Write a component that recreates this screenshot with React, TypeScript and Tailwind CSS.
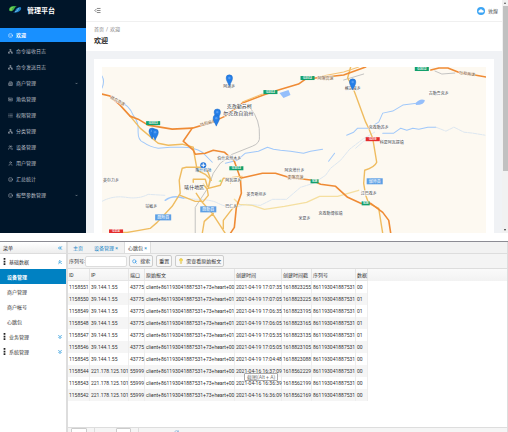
import { useState } from 'react';
import {
  Building2,
  ChevronDown,
  ChevronsDown,
  ChevronsLeft,
  ChevronsUp,
  IdCard,
  IndentDecrease,
  Lightbulb,
  List,
  Meh,
  Network,
  RotateCw,
  Search,
  Smile,
  User,
  Users,
} from 'lucide-react';

const menuItems = [
  { label: '欢迎', icon: Smile },
  { label: '命令接收日志', icon: Network },
  { label: '命令发送日志', icon: Network },
  { label: '商户管理', icon: Building2, nested: true },
  { label: '角色管理', icon: IdCard },
  { label: '权限管理', icon: List },
  { label: '分类管理', icon: Network },
  { label: '设备管理', icon: Users },
  { label: '用户管理', icon: User },
  { label: '汇总统计', icon: Meh },
  { label: '报警参数管理', icon: Smile, nested: true },
];

const treeItems = ['设备管理', '商户管理', '商户帐号', '心跳包'];

const columns = [
  { title: 'ID', width: 'w-[22px]' },
  { title: 'IP', width: 'w-[39px]' },
  { title: '端口', width: 'w-[16px]' },
  { title: '原始报文', width: 'w-[90px]' },
  { title: '创建时间', width: 'w-[47px]' },
  { title: '创建时间戳', width: 'w-[30px]' },
  { title: '序列号', width: 'w-[44px]' },
  { title: '数据', width: 'w-[12px]' },
];

const heartbeats = [
  { id: '1158551', ip: '39.144.1.55', port: '43775', time: '2021-04-19 17:07:35', stamp: '1618823255', data: '00' },
  { id: '1158550', ip: '39.144.1.55', port: '43775', time: '2021-04-19 17:07:05', stamp: '1618823225', data: '01' },
  { id: '1158549', ip: '39.144.1.55', port: '43775', time: '2021-04-19 17:06:35', stamp: '1618823195', data: '01' },
  { id: '1158548', ip: '39.144.1.55', port: '43775', time: '2021-04-19 17:06:05', stamp: '1618823165', data: '01' },
  { id: '1158547', ip: '39.144.1.55', port: '43775', time: '2021-04-19 17:05:35', stamp: '1618823135', data: '01' },
  { id: '1158546', ip: '39.144.1.55', port: '43775', time: '2021-04-19 17:05:05', stamp: '1618823105', data: '00' },
  { id: '1158545', ip: '39.144.1.55', port: '43775', time: '2021-04-19 17:04:48', stamp: '1618823088', data: '00' },
  { id: '1158544', ip: '221.178.125.101', port: '55999', time: '2021-04-16 16:37:09', stamp: '1618562229', data: '00' },
  { id: '1158543', ip: '221.178.125.101', port: '55999', time: '2021-04-16 16:36:39', stamp: '1618562199', data: '00' },
  { id: '1158542', ip: '221.178.125.101', port: '55999', time: '2021-04-16 16:36:09', stamp: '1618562169', data: '00' },
];

const serial = '861193041887531';

const pins = [
  [217, 118],
  [216, 124],
  [152, 137],
  [155, 138],
  [229, 84],
  [352, 88],
];

const places = [
  { x: 229, y: 88, name: '阿湖乡' },
  { x: 352, y: 90, name: '格达良乡' },
  { x: 438, y: 95, name: '古勒鲁克乡' },
  { x: 378, y: 129, name: '克孜勒苏乡' },
  { x: 391, y: 144, name: '科夏阿瓦提镇' },
  { x: 111, y: 182, name: '英尔力乡' },
  { x: 151, y: 208, name: '站敏乡' },
  { x: 229, y: 160, name: '伯什克然木乡' },
  { x: 233, y: 182, name: '阿瓦提乡' },
  { x: 294, y: 172, name: '阿克塔什乡' },
  { x: 256, y: 196, name: '英吾斯坦乡' },
  { x: 231, y: 208, name: '巴仁乡' },
  { x: 304, y: 220, name: '米夏乡' },
  { x: 330, y: 215, name: '克孜勒博依镇' },
  { x: 368, y: 195, name: '江巴孜乡' },
];

const shields = [
  { x: 153, y: 123, code: 'G3013', fill: '#12a06c' },
  { x: 307, y: 78, code: 'G3012', fill: '#12a06c' },
  { x: 270, y: 92, code: 'G3012', fill: '#12a06c' },
  { x: 236, y: 168, code: 'G3012', fill: '#12a06c' },
  { x: 314, y: 181, code: 'S38', fill: '#12a06c' },
  { x: 365, y: 203, code: 'S38', fill: '#12a06c' },
  { x: 421, y: 69, code: 'G3012', fill: '#12a06c' },
  { x: 372, y: 139, code: 'G209', fill: '#e42c2c' },
  { x: 116, y: 231, code: 'G314', fill: '#e42c2c' },
];

const counties = [
  { x: 163, y: 217, name: '疏附县' },
  { x: 208, y: 209, name: '疏勒县' },
  { x: 374, y: 181, name: '伽师县' },
];

function DistrictMap() {
  return (
    <svg viewBox="102 67 383 166" className="block w-full" role="img" aria-label="喀什地区">
      <rect x="102" y="67" width="383" height="166" fill="#fdf9f1" />
      <g fill="none" strokeLinejoin="round" strokeLinecap="round">
        {/* rivers */}
        <g stroke="#a0c8fa" strokeWidth="1">
          <path d="M102 76q3 5 0 12" />
          <path d="M120 102q9 3 13 13 6 7 5 17 0 8 5 10 7 5 15 6l12 -1 12 0q12 0 20 5l10 10" />
          <path d="M225 163l12 -3 8 -7 13 -2 9 -4 6 2 7 1 10 1 13 2 7 -2 12 -2" />
          <path d="M328 161l6 -8M346 135l7 -3 4 -4h11l10 -6 4 -9 10 -2 10 -6 16 -2" />
          <path d="M382 133h11l7 -5 6 2 6 -2 6 1 9 -2 8 0" />
          <path d="M165 200q8 -6 19 -2" strokeWidth="1.4" />
        </g>
        <g stroke="#d5e2f0" strokeWidth=".8" strokeDasharray="4 1">
          <path d="M102 201q11 -6 24 -4t22 -3l17 1M184 198l12 1q12 0 20 3q9 5 18 5l12 -3 14 1 12 -6 14 0 14 -12 13 -4 12 -8 5 -7 10 -8 9 -11 13 -10 12 -7" />
          <path d="M435 127l10 4 8 -4 10 5 9 1 12 2M355 148l8 -7 9 -3" />
        </g>
        {/* railway */}
        <g stroke="#b5b5b5" strokeWidth=".8">
          <path d="M195 233v-26l13 -20 5 -14 7 -10 12 -9 20 -8q8 -3 7 -10 1 -16 -9 -28" />
          <path d="M343 80l20 -6M434 71l7 3 13 -1" />
        </g>
        {/* county roads */}
        <g stroke="#efbc60" strokeWidth="1.4">
          <path d="M116 232h11q12 -2 23 -4l7 -6 15 -16 8 -13 -1 -13 3 -12 4 -1h15" />
          <path d="M130 116l10 12 18 15 10 2 14 -1 11 3 1 7 3 16 8 4 6 6" />
          <path d="M180 195l15 6 8 0 5 -6 -1 -6 -4 -5M207 170l3 8 -2 10 12 -3 3 -7h12M193 182v-3h12l2 7M196 193l6 9 10 11 13 20M213 213l-9 8 -2 12M233 207l-10 13 0 8" />
          <path d="M350 67l-3 11 5 9 3 8 10 27 3 6 4 10 4 24q-2 5 -12 8l-1 13 2 12 3 8 10 5 4 25" />
          <path d="M234 199l5 5 13 1 12 4 20 -3 22 -4 13 -6h18l21 -6" stroke="#f5dfa0" />
        </g>
        {/* expressways */}
        <g stroke="#ef8b35" strokeWidth="1.6">
          <path d="M102 94l8 2 10 9 10 11 8 3 10 6 24 4 20 -1 20 -6 13 -6 17 -13 21 -8 15 -5 20 -6 7 -5 20 -2 18 -2 22 -8" />
          <path d="M192 128l-9 13 10 9 2 4 10 -1 8 -3 11 2 10 9 6 17 1 15 -5 14 -2 20 -4 6" />
          <path d="M240 178l22 -5h13l13 4 24 3 8 4 15 2 12 11 13 6h10l12 9 6 8 2 13" />
          <path d="M430 70l8 -2 9 0 10 4 28 5" />
        </g>
        <path d="M242 102l20 -8M322 76l21 -4 15 -5M242 176l-10 1 -2 6" stroke="#f5c273" strokeWidth="1" />
      </g>
      <path d="M279 93l9 -3 2 5 -7 3zM415 103q4 -5 9 -3q0 5 -9 5z" fill="#95bffb" />
      <path d="M218 181l3 -2v3z" fill="#a7dd82" />

      <g className="font-['Noto_Sans_CJK_SC',sans-serif]" textAnchor="middle">
        <g fill="#806040" fontSize="4" stroke="#fdf9f1" strokeWidth=".6" paintOrder="stroke">
          <text x="117" y="102" transform="rotate(28 117 102)">疏乌高速</text>
          <text x="208" y="124" transform="rotate(-15 208 124)">吐和高速</text>
          <text x="325" y="80">阿喀高速</text>
          <text x="295" y="179">麦喀高速</text>
          <text x="466" y="75" transform="rotate(8 466 75)">吐和高速</text>
        </g>
        <g fill="#444" fontSize="4" stroke="#fff" strokeWidth=".8" paintOrder="stroke">
          {places.map((place) => (
            <text key={place.name} x={place.x} y={place.y}>{place.name}</text>
          ))}
        </g>
        <g fill="#333" fontSize="5" stroke="#fff" strokeWidth="1" paintOrder="stroke">
          <text x="239" y="108">克孜勒苏柯</text>
          <text x="238" y="115">尔克孜自治州</text>
          <text x="194" y="189">喀什地区</text>
        </g>
        <text x="203" y="172" fill="#2a6cb0" fontSize="4">喀什机场</text>
        <g fontSize="4" fill="#fff">
          {counties.map((county) => (
            <g key={county.name}>
              <rect x={county.x - 8} y={county.y - 3} width="16" height="6" fill="#5d9fe5" />
              <text x={county.x} y={county.y + 2}>{county.name}</text>
            </g>
          ))}
        </g>
      </g>
      <g fill="#fff" fontSize="3" fontWeight="bold" textAnchor="middle" className="font-['Liberation_Sans',sans-serif]">
        {shields.map((shield) => (
          <g key={`${shield.x}-${shield.y}`}>
            <rect
              x={shield.x - (shield.code.length > 3 ? 7 : 4)}
              y={shield.y - 2}
              width={shield.code.length > 3 ? 14 : 8}
              height="4"
              fill={shield.fill}
            />
            <text x={shield.x} y={shield.y + 1}>{shield.code}</text>
          </g>
        ))}
      </g>
      <circle cx="203" cy="165" r="3" fill="#2678dc" />
      <path d="M203 163v4M201 165h4" stroke="#fff" strokeWidth="1" />
      {pins.map(([x, y]) => (
        <g key={`${x}-${y}`} transform={`translate(${x} ${y})`}>
          <path d="M0 2C-1 -1 -3.2 -3 -3.2 -6a3.2 3.2 0 0 1 6.4 0C3.2 -3 1 -1 0 2z" fill="#257fe8" stroke="#1762bd" strokeWidth=".4" />
          <circle cy="-6" r="1.2" fill="#569df2" />
        </g>
      ))}
    </svg>
  );
}

function PlatformPanel() {
  const [active, setActive] = useState('欢迎');

  return (
    <section className="flex bg-[#f0f2f5]">
      <aside className="w-[86px] shrink-0 bg-[#001529] text-[#b8bec5]">
        <div className="flex h-[28px] items-start gap-[5px] pt-[5px] pl-[8px]">
          <svg viewBox="0 0 28 20" className="h-[10px] w-[14px]">
            <path d="M2 10C2 3 10 0 18 3C12 4 14 9 8 12C5 13 2 12 2 10z" fill="#43b649" />
            <path d="M9 4q-5 3 -3 7" fill="none" stroke="#d7eb6b" strokeWidth="1.5" />
            <path d="M26 5C28 11 20 16 10 15C17 13 13 9 19 6C22 4 25 3 26 5z" fill="#1b80c8" />
            <path d="M21 6q0 6 -7 8" fill="none" stroke="#9ed5ef" strokeWidth="1.3" />
          </svg>
          <h1 className="text-[7px] leading-[12px] font-bold text-white">管理平台</h1>
        </div>
        <nav className="flex flex-col gap-[2px]">
          {menuItems.map((item) => (
            <button
              key={item.label}
              type="button"
              onClick={() => setActive(item.label)}
              className={
                active === item.label
                  ? 'flex h-[14px] items-center gap-[3px] bg-[#1890ff] px-[8px] font-bold text-white'
                  : 'flex h-[14px] items-center gap-[3px] px-[8px]'
              }
            >
              <item.icon className="size-[5px]" />
              <span>{item.label}</span>
              {item.nested && <ChevronDown strokeWidth={4} className="ml-auto size-[3px]" />}
            </button>
          ))}
        </nav>
      </aside>

      <div className="min-w-0 flex-1">
        <header className="flex h-[22px] items-center border-b border-[#f0f0f0] bg-white pr-[4px] pl-[8px]">
          <button type="button" aria-label="收起菜单">
            <IndentDecrease className="size-[7px] text-[#333]" />
          </button>
          <div className="ml-auto flex items-center gap-[3px] text-[#555]">
            <svg viewBox="0 0 8 8" className="size-[8px]">
              <circle cx="4" cy="4" r="4" fill="#3da5f4" />
              <path d="M2 5.5a1.2 1.2 0 0 1 .4-2.2a1.7 1.7 0 0 1 3.1 0a1.1 1.1 0 0 1 .3 2.2z" fill="#fff" />
            </svg>
            <span>敦煌</span>
          </div>
        </header>
        <div className="flex h-[29px] flex-col gap-[3px] bg-white px-[8px] pt-[3px]">
          <div className="flex gap-[2px] leading-[8px] text-[#808080]">
            <a href="#home">首页</a>
            <span>/</span>
            <span>欢迎</span>
          </div>
          <h2 className="text-[7px] leading-[10px] font-bold text-[#262626]">欢迎</h2>
        </div>
        <div className="px-[8px] pt-[8px]">
          <div className="bg-white px-[8px] pt-[8px]">
            <DistrictMap />
          </div>
        </div>
      </div>

      <div className="flex w-[6px] shrink-0 flex-col items-center bg-[#f1f1f1] py-[2px]">
        <span className="border-x-[1px] border-b-[2px] border-x-transparent border-b-[#555]" />
        <span className="mt-[2px] h-[72%] w-[5px] bg-[#c1c1c1]" />
        <span className="mt-auto border-x-[1px] border-t-[2px] border-x-transparent border-t-[#333]" />
      </div>
    </section>
  );
}

function TreeGroup({ label, open }: { label: string; open?: boolean }) {
  const Arrow = open ? ChevronsUp : ChevronsDown;

  return (
    <button type="button" className="flex h-[15px] w-full items-center gap-[3px] px-[3px]">
      <svg viewBox="0 0 3 8" className="h-[7px] w-[3px]">
        <path d="M.5 0h2v2h-2zM.5 3h2v2h-2zM.5 6h2v2h-2z" fill="#222" />
      </svg>
      <span>{label}</span>
      <Arrow strokeWidth={4} className="ml-auto size-[6px] text-[#38a1df]" />
    </button>
  );
}

function HeartbeatPanel() {
  return (
    <section className="flex flex-1 border-t border-[#8c8c94] text-[#333]">
      <aside className="w-[67px] shrink-0 border-r border-[#ddd]">
        <div className="flex h-[12px] items-center justify-between border-b border-[#ddd] bg-gradient-to-b from-white to-[#eee] px-[3px]">
          <span>菜单</span>
          <ChevronsLeft strokeWidth={4} className="size-[6px] text-[#38a1df]" />
        </div>
        <TreeGroup label="基础数据" open />
        <ul>
          {treeItems.map((item, index) => (
            <li key={item}>
              <button
                type="button"
                className={
                  index === 0
                    ? 'flex h-[15px] w-full items-center bg-[#0081c2] px-[7px] font-bold text-white'
                    : 'flex h-[15px] w-full items-center px-[7px]'
                }
              >
                {item}
              </button>
            </li>
          ))}
        </ul>
        <TreeGroup label="业务管理" />
        <TreeGroup label="系统管理" />
      </aside>

      <div className="flex min-w-0 flex-1 flex-col border-r border-l border-[#ddd]">
        <div className="flex h-[12px] items-end border-b border-[#ddd] bg-[#f2f2f2] text-[#1683c4]">
          <button type="button" className="h-[11px] px-[5px]">主页</button>
          <button type="button" className="h-[11px] px-[6px]">设备管理 ×</button>
          <button type="button" className="h-[11px] border-x border-[#ddd] bg-white px-[3px] text-[#333]">
            心跳包 <span className="text-[#1683c4]">×</span>
          </button>
        </div>
        <form className="flex h-[14px] items-center bg-[#f4f4f4] pl-[1px]">
          <label htmlFor="serial">序列号:</label>
          <input id="serial" className="h-[11px] w-[42px] rounded-[2px] border border-[#ddd] bg-white px-[2px]" />
          <button type="button" className="ml-[2px] flex h-[12px] items-center gap-[3px] rounded-[2px] border border-[#ccc] bg-[#f8f8f8] px-[2px]">
            <Search strokeWidth={3} className="size-[5px] text-[#2994e7]" />
            搜索
          </button>
          <button type="button" className="ml-[3px] h-[12px] rounded-[2px] border border-[#ccc] bg-[#f8f8f8] px-[2px]">重置</button>
          <button type="button" className="ml-[3px] flex h-[12px] items-center gap-[2px] rounded-[2px] border border-[#ccc] bg-[#f8f8f8] px-[2px]">
            <Lightbulb className="size-[6px] fill-[#f7dd56] text-[#d6b22d]" />
            需查看原始报文
          </button>
        </form>
        <div className="relative border-t border-[#ddd] bg-gradient-to-b from-[#fafafa] to-[#f2f2f2] bg-[length:100%_12px] bg-no-repeat">
          <table className="w-[300px] table-fixed border-separate border-spacing-0 text-left whitespace-nowrap">
            <thead>
              <tr className="h-[12px]">
                {columns.map((column) => (
                  <th key={column.title} className={`${column.width} border-r border-b border-[#e5e5e5] pl-[1px] font-normal`}>
                    {column.title}
                  </th>
                ))}
              </tr>
            </thead>
            <tbody>
              {heartbeats.map((row) => (
                <tr key={row.id} className="h-[12px] even:bg-[#f5f5f5]">
                  {[row.id, row.ip, row.port, `client+${serial}+73+heart+${row.data}`, row.time, row.stamp, serial, row.data].map((value, index) => (
                    <td key={columns[index].title} className="border-r border-[#eee] pl-[1px]">{value}</td>
                  ))}
                </tr>
              ))}
            </tbody>
          </table>
          <div role="tooltip" className="absolute top-[104px] left-[176px] rounded-[1px] border border-[#aaa] bg-white px-[2px] leading-[6px] text-[#777]">
            截图(Alt + A)
          </div>
        </div>
        <footer className="mt-auto flex h-[5px] items-start gap-[7px] overflow-hidden border-t border-[#ddd] bg-[#f5f5f5] px-[3px]">
          <select aria-label="每页条数" className="h-[7px] w-[16px] shrink-0 appearance-none rounded-[1px] border border-[#ccc] bg-white" />
          <span className="h-[5px] border-l border-[#ddd]" />
          <input aria-label="页码" className="ml-[14px] h-[7px] w-[15px] rounded-[1px] border border-[#ccc] bg-white" />
          <span className="h-[5px] border-l border-[#ddd]" />
          <RotateCw className="mt-[2px] ml-[28px] size-[5px] shrink-0 text-[#4c8fcf]" />
        </footer>
      </div>
    </section>
  );
}

export default function App() {
  return (
    <main className="flex min-h-screen flex-col gap-[8px] bg-white font-[Roboto,'Noto_Sans_CJK_SC',sans-serif] text-[5px] leading-[8px]">
      <PlatformPanel />
      <HeartbeatPanel />
    </main>
  );
}
